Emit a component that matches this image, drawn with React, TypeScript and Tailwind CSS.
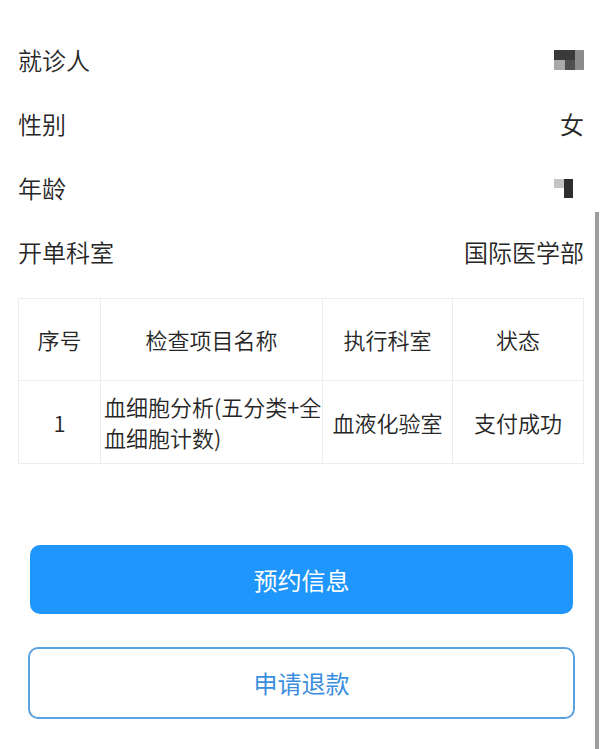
const rows = [
  { label: '就诊人', value: 'name' },
  { label: '性别', value: '女' },
  { label: '年龄', value: 'age' },
  { label: '开单科室', value: '国际医学部' },
]

function NameMask() {
  return (
    <div className="flex h-[20px] w-[30px]">
      <div className="flex w-[21px] flex-col">
        <div className="h-[10px] bg-[#3a3a3a]" />
        <div className="flex h-[10px]">
          <div className="w-[11px] bg-[#a9a9a9]" />
          <div className="w-[10px] bg-[#4f4f4f]" />
        </div>
      </div>
      <div className="w-[9px] bg-[#8c8c8c]" />
    </div>
  )
}

function AgeMask() {
  return (
    <div className="flex h-[19px] w-[19px] items-start">
      <div className="h-[9px] w-[10px] bg-[#c4c4c4]" />
      <div className="h-[19px] w-[9px] bg-[#2e2e2e]" />
    </div>
  )
}

export default function App() {
  return (
    <div
      className="relative h-[749px] w-[600px] overflow-hidden bg-white font-[350] text-[#262626]"
      style={{ fontFamily: '"Noto Sans CJK SC", "Noto Sans", sans-serif' }}
    >
      {/* Info rows */}
      <div className="flex flex-col pt-[28px] pl-[18px] pr-[16px]">
        {rows.map((row) => (
          <div key={row.label} className="flex h-[64px] items-center justify-between">
            <span className="text-[24px] leading-[30px]">{row.label}</span>
            {row.value === 'name' ? (
              <NameMask />
            ) : row.value === 'age' ? (
              <div className="pr-[11px]">
                <AgeMask />
              </div>
            ) : (
              <span className="text-[24px] leading-[30px]">{row.value}</span>
            )}
          </div>
        ))}
      </div>

      {/* Table */}
      <div className="mt-[14px] ml-[18px] w-[566px] border border-[#ededed] text-[22px]">
        <div className="flex h-[82px] border-b border-[#ededed]">
          <div className="flex w-[82px] items-center justify-center border-r border-[#ededed]">序号</div>
          <div className="flex w-[222px] items-center justify-center border-r border-[#ededed]">检查项目名称</div>
          <div className="flex w-[130px] items-center justify-center border-r border-[#ededed]">执行科室</div>
          <div className="flex flex-1 items-center justify-center">状态</div>
        </div>
        <div className="flex h-[82px]">
          <div className="flex w-[82px] items-center justify-center border-r border-[#ededed]">1</div>
          <div className="flex w-[222px] flex-col justify-center border-r border-[#ededed] pl-[3px] leading-[31px]">
            <span className="whitespace-nowrap">血细胞分析(五分类+全</span>
            <span className="whitespace-nowrap">血细胞计数)</span>
          </div>
          <div className="flex w-[130px] items-center justify-center border-r border-[#ededed]">血液化验室</div>
          <div className="flex flex-1 items-center justify-center">支付成功</div>
        </div>
      </div>

      {/* Buttons */}
      <div className="mt-[81px] flex flex-col">
        <button
          type="button"
          className="ml-[30px] mr-[27px] h-[69px] rounded-[10px] bg-[#1e96fb] text-[24px] font-normal text-white"
        >
          预约信息
        </button>
        <button
          type="button"
          className="ml-[28px] mr-[25px] mt-[33px] h-[72px] rounded-[10px] border-2 border-[#5aa1e0] bg-white text-[24px] font-normal text-[#3a8ede]"
        >
          申请退款
        </button>
      </div>

      {/* Scrollbar */}
      <div className="absolute right-[1px] top-[212px] bottom-0 w-[4px] bg-[#9e9e9e]" />
    </div>
  )
}
